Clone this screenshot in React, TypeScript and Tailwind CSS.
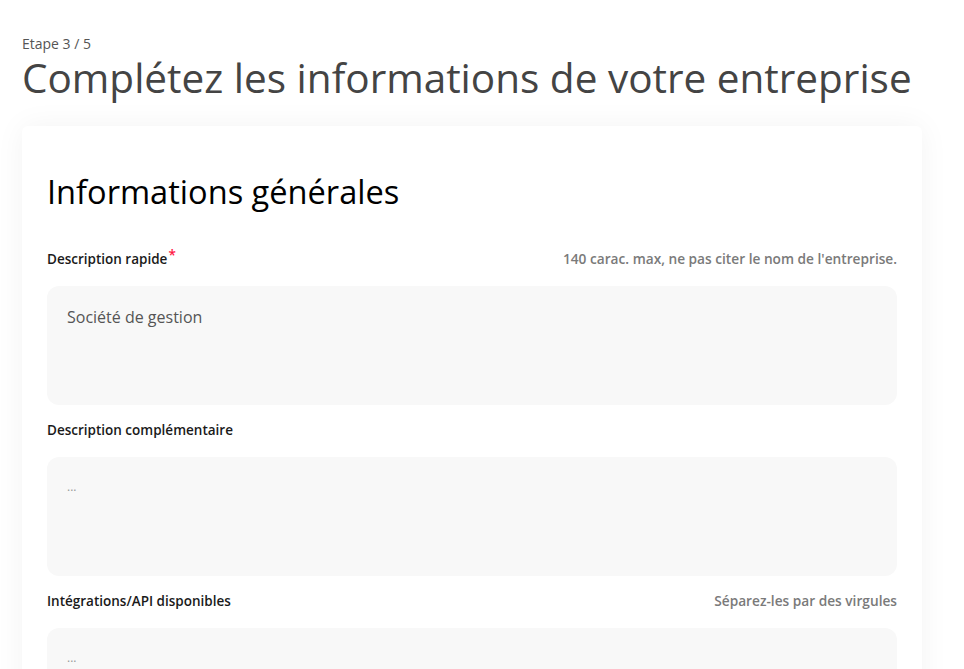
import React from "react";

const font = { fontFamily: "'Open Sans', 'Noto Sans', sans-serif" };

function Field({ label, required, hint, placeholder, small }: { label: string; required?: boolean; hint?: string; placeholder: string; small?: boolean }) {
  return (
    <div className="flex flex-col">
      <div className="flex items-center justify-between h-[20px]">
        <div className="text-[13.5px] font-semibold text-[#1a1a1a]">
          {label}
          {required && <span className="text-[#ff1744] relative -top-[4px] ml-[1px]">*</span>}
        </div>
        {hint && <div className="text-[13.7px] font-semibold text-[#7a7a7a]">{hint}</div>}
      </div>
      <div className="mt-[17px] h-[119px] rounded-[12px] bg-[#f8f8f8] px-[20px] pt-[20px]">
        <div className={small ? "text-[12px] text-[#999] leading-[20px]" : "text-[16px] text-[#555] leading-[22px]"}>{placeholder}</div>
      </div>
    </div>
  );
}

export default function App() {
  return (
    <div className="min-h-[669px] bg-white px-[22px] pt-[38px] overflow-hidden" style={font}>
      <div className="text-[14px] text-[#555] leading-[12px]">Etape 3 / 5</div>
      <h1 className="text-[40.5px] leading-[44px] text-[#444] font-medium mt-[6px]">Complétez les informations de votre entreprise</h1>
      <div className="mt-[26px] w-[900px] bg-white rounded-[6px] shadow-[0_0_30px_rgba(0,0,0,0.05)] px-[25px] pt-[46px] pb-[40px]">
        <h2 className="text-[32.6px] leading-[40px] text-black font-medium">Informations générales</h2>
        <div className="mt-[37px] flex flex-col gap-[15px]">
          <Field label="Description rapide" required hint="140 carac. max, ne pas citer le nom de l'entreprise." placeholder="Société de gestion" />
          <Field label="Description complémentaire" placeholder="..." small />
          <Field label="Intégrations/API disponibles" hint="Séparez-les par des virgules" placeholder="..." small />
        </div>
      </div>
    </div>
  );
}
